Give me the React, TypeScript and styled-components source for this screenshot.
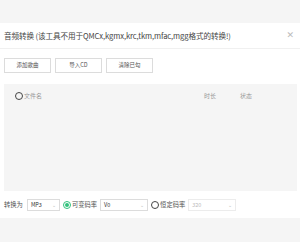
import styled, { createGlobalStyle } from "styled-components";

const GlobalStyle = createGlobalStyle`
	html, body {
		margin: 0;
		padding: 0;
		background: #fff;
	}
	body {
		font-family: "Noto Sans CJK SC", "Noto Sans", sans-serif;
	}
`;

const Page = styled.div`
	width: 300px;
	height: 242px;
	display: flex;
	flex-direction: column;
	background: #fff;
	overflow: hidden;
`;

const Band = styled.div<{ $h: number }>`
	height: ${(p) => p.$h}px;
	flex-shrink: 0;
	background: #f5f5f5;
`;

const TitleBar = styled.div`
	height: 25px;
	display: flex;
	align-items: center;
	justify-content: space-between;
	padding: 0 6px 0 4px;
	border-bottom: 1px solid #f0f0f0;
`;

const Title = styled.div`
	font-size: 7.6px;
	color: #444;
	white-space: nowrap;
	letter-spacing: -0.1px;
`;

const Close = styled.span`
	font-size: 9px;
	color: #bbb;
	font-family: "DejaVu Sans", sans-serif;
	line-height: 1;
`;

const Toolbar = styled.div`
	display: flex;
	gap: 4px;
	padding: 9px 4px 0;
`;

const Button = styled.div`
	width: 45px;
	height: 13px;
	border: 1px solid #dcdcdc;
	background: #fff;
	display: flex;
	align-items: center;
	justify-content: center;
	font-size: 5.5px;
	color: #555;
`;

const ListArea = styled.div`
	margin: 11px 3px 0 4px;
	height: 108px;
	background: #f5f5f5;
`;

const HeaderRow = styled.div`
	display: grid;
	grid-template-columns: 189px 36px 1fr;
	align-items: center;
	height: 12px;
	margin-top: 6px;
	padding-left: 11px;
	font-size: 6px;
	color: #999;
`;

const NameCell = styled.div`
	display: flex;
	align-items: center;
	gap: 1px;
`;

const Radio = styled.span<{ $on?: boolean }>`
	width: 6px;
	height: 6px;
	border-radius: 50%;
	border: 1.3px solid ${(p) => (p.$on ? "#31c27c" : "#444")};
	display: inline-flex;
	align-items: center;
	justify-content: center;
	flex-shrink: 0;
	&::after {
		content: "";
		width: 4px;
		height: 4px;
		border-radius: 50%;
		background: ${(p) => (p.$on ? "#31c27c" : "transparent")};
	}
`;

const BottomBar = styled.div`
	height: 27px;
	display: flex;
	align-items: center;
	padding-left: 4px;
	font-size: 6.3px;
	color: #555;
`;

const Label = styled.span`
	margin-right: 4px;
	white-space: nowrap;
`;

const RadioLabel = styled.label`
	display: flex;
	align-items: center;
	gap: 1px;
	margin: 0 3px;
	white-space: nowrap;
`;

const Select = styled.div<{ $w: number; $disabled?: boolean }>`
	width: ${(p) => p.$w}px;
	height: 10px;
	border: 1px solid ${(p) => (p.$disabled ? "#ececec" : "#dcdcdc")};
	background: #fff;
	display: flex;
	align-items: center;
	justify-content: space-between;
	padding: 0 3px;
	box-sizing: content-box;
	font-size: 5.5px;
	color: ${(p) => (p.$disabled ? "#bbb" : "#333")};
`;

const Caret = styled.span`
	font-size: 5px;
	color: #bbb;
`;

export default function App() {
	return (
		<Page>
			<GlobalStyle />
			<Band $h={23} />
			<TitleBar>
				<Title>音频转换 (该工具不用于QMCx,kgmx,krc,tkm,mfac,mgg格式的转换!)</Title>
				<Close>✕</Close>
			</TitleBar>
			<Toolbar>
				<Button>添加歌曲</Button>
				<Button>导入CD</Button>
				<Button>清除已勾</Button>
			</Toolbar>
			<ListArea>
				<HeaderRow>
					<NameCell>
						<Radio />
						<span>文件名</span>
					</NameCell>
					<span>时长</span>
					<span>状态</span>
				</HeaderRow>
			</ListArea>
			<BottomBar>
				<Label>转换为</Label>
				<Select $w={25}>
					<span>MP3</span>
					<Caret>⌄</Caret>
				</Select>
				<RadioLabel>
					<Radio $on />
					<span>可变码率</span>
				</RadioLabel>
				<Select $w={40}>
					<span>V0</span>
					<Caret>⌄</Caret>
				</Select>
				<RadioLabel>
					<Radio />
					<span>恒定码率</span>
				</RadioLabel>
				<Select $w={40} $disabled>
					<span>320</span>
					<Caret>⌄</Caret>
				</Select>
			</BottomBar>
			<Band $h={24} />
		</Page>
	);
}
